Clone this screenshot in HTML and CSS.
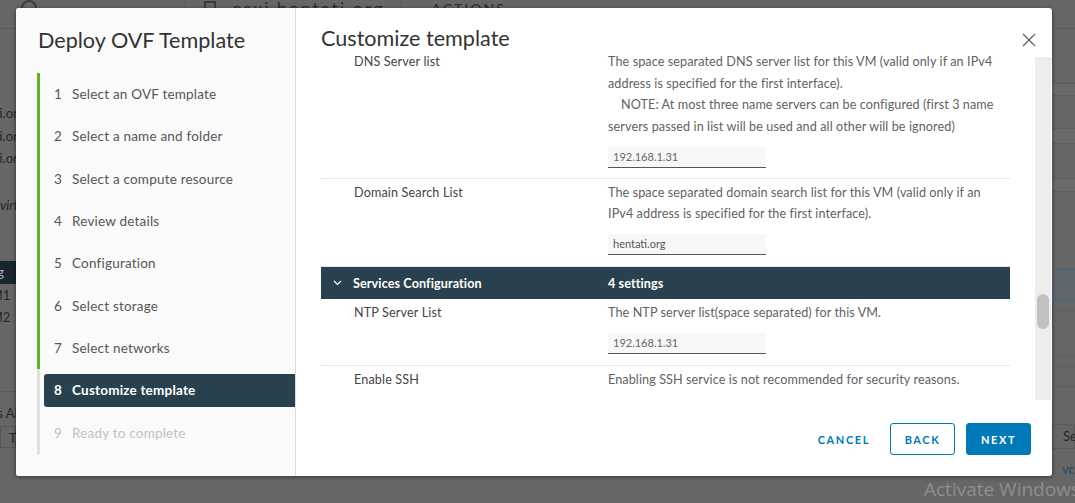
FILE: index.html
```html
<!DOCTYPE html>
<html lang="en">
<head>
<meta charset="utf-8">
<title>Deploy OVF Template</title>
<link rel="stylesheet" href="styles.css">
</head>
<body>
<div class="page">
  <header class="topbar">
    <span class="tb-icon"></span>
    <span class="tb-div first"></span>
    <span class="tb-vm"></span>
    <span class="tb-host">esxi.hentati.org</span>
    <span class="tb-div second"></span>
    <span class="tb-act">ACTIONS</span>
  </header>
  <div class="bg-body">
    <aside class="bg-tree">
      <div class="bg-item">esxi01.hentati.org</div>
      <div class="bg-item">esxi02.hentati.org</div>
      <div class="bg-item">esxi03.hentati.org</div>
      <div class="bg-item bg-italic">Discovered virtual machines</div>
      <div class="bg-item bg-sel">vcsa.hentati.org</div>
      <div class="bg-item bg-short">VM1</div>
      <div class="bg-item bg-short">VM2</div>
      <div class="bg-gap"></div>
      <div class="bg-item bg-tasks">Recent Tasks Alarms</div>
      <div class="bg-item bg-cell">Task Name</div>
    </aside>
    <section class="bg-main"></section>
    <aside class="bg-right">
      <div class="bg-r h28"></div>
      <div class="bg-r band h12"></div>
      <div class="bg-r h33"></div>
      <div class="bg-r band h15"></div>
      <div class="bg-r h35"></div>
      <div class="bg-r band h13"></div>
      <div class="bg-r h77"></div>
      <div class="bg-r bg-rsel"></div>
      <div class="bg-r h10"></div>
      <div class="bg-r h45"></div>
      <div class="bg-r h11"></div>
      <div class="bg-r h20"></div>
      <div class="bg-r bg-rhead">Server</div>
      <div class="bg-r bg-rlink">vcenter</div>
    </aside>
  </div>
</div>

<div class="watermark">Activate Windows</div>

<div class="modal" role="dialog">
  <nav class="wizard-nav">
    <h1 class="wizard-title">Deploy OVF Template</h1>
    <ol class="steps">
      <li class="step done"><span class="step-inner"><span class="num">1</span>Select an OVF template</span></li>
      <li class="step done"><span class="step-inner"><span class="num">2</span>Select a name and folder</span></li>
      <li class="step done"><span class="step-inner"><span class="num">3</span>Select a compute resource</span></li>
      <li class="step done"><span class="step-inner"><span class="num">4</span>Review details</span></li>
      <li class="step done"><span class="step-inner"><span class="num">5</span>Configuration</span></li>
      <li class="step done"><span class="step-inner"><span class="num">6</span>Select storage</span></li>
      <li class="step done"><span class="step-inner"><span class="num">7</span>Select networks</span></li>
      <li class="step active"><span class="step-inner"><span class="num">8</span>Customize template</span></li>
      <li class="step disabled"><span class="step-inner"><span class="num">9</span>Ready to complete</span></li>
    </ol>
  </nav>

  <section class="wizard-main">
    <header class="main-head">
      <h2 class="main-title">Customize template</h2>
      <button class="close" aria-label="Close">
        <svg width="14" height="14" viewBox="0 0 14 14"><path d="M1 1 L13 13 M13 1 L1 13" stroke="#666" stroke-width="1.4" fill="none"/></svg>
      </button>
    </header>

    <div class="main-body">
      <div class="rows">
        <div class="row first">
          <div class="row-label">DNS Server list</div>
          <div class="row-value">
            <p class="desc">The space separated DNS server list for this VM (valid only if an IPv4<br>address is specified for the first interface).<br><span class="indent">NOTE: At most three name servers can be configured (first 3 name</span><br>servers passed in list will be used and all other will be ignored)</p>
            <div class="input">192.168.1.31</div>
          </div>
        </div>
        <div class="row">
          <div class="row-label">Domain Search List</div>
          <div class="row-value">
            <p class="desc">The space separated domain search list for this VM (valid only if an<br>IPv4 address is specified for the first interface).</p>
            <div class="input dark">hentati.org</div>
          </div>
        </div>
        <div class="section-head">
          <div class="sec-label">
            <svg class="chev" width="9" height="6" viewBox="0 0 9 6"><path d="M1 1 L4.5 4.5 L8 1" stroke="#fff" stroke-width="1.2" fill="none"/></svg>
            Services Configuration
          </div>
          <div class="sec-count">4 settings</div>
        </div>
        <div class="row">
          <div class="row-label">NTP Server List</div>
          <div class="row-value">
            <p class="desc">The NTP server list(space separated) for this VM.</p>
            <div class="input">192.168.1.31</div>
          </div>
        </div>
        <div class="row">
          <div class="row-label">Enable SSH</div>
          <div class="row-value">
            <p class="desc">Enabling SSH service is not recommended for security reasons.</p>
          </div>
        </div>
      </div>
      <div class="scroll-track"><div class="scroll-thumb"></div></div>
    </div>

    <footer class="main-foot">
      <button class="btn btn-link">CANCEL</button>
      <button class="btn btn-outline">BACK</button>
      <button class="btn btn-primary">NEXT</button>
    </footer>
  </section>
</div>
</body>
</html>
```

FILE: styles.css
```css
html, body {
  margin: 0;
  padding: 0;
}
body {
  width: 1075px;
  height: 503px;
  overflow: hidden;
  position: relative;
  background: #666666;
  font-family: "Lato", "Open Sans", sans-serif;
}

/* ---------- dimmed background page ---------- */
.page {
  width: 1075px;
  height: 503px;
  display: flex;
  flex-direction: column;
}
.topbar {
  height: 28px;
  flex: none;
  display: flex;
  align-items: center;
  border-bottom: 1px solid #5c5c5c;
  color: #2c2c2c;
  font-size: 18px;
  letter-spacing: 2px;
}
.tb-icon {
  width: 12px;
  height: 12px;
  margin: 0 0 12px 21px;
  border: 2px solid #3c3c3c;
  border-radius: 50%;
}
.tb-div {
  width: 1px;
  height: 28px;
  background: #5a5a5a;
}
.tb-div.first { margin-left: 148px; }
.tb-div.second { margin-left: 16px; }
.tb-vm {
  width: 8px;
  height: 12px;
  border: 2px solid #3c3c3c;
  margin: 0 0 10px 18px;
}
.tb-host { margin: 0 0 12px 16px; }
.tb-act { margin: 0 0 12px 30px; font-size: 14px; }

.bg-body {
  flex: 1;
  display: flex;
}
.bg-tree {
  width: 16px;
  flex: none;
  overflow: hidden;
  padding-top: 73px;
  font-size: 13px;
  color: #262626;
}
.bg-item {
  height: 22.5px;
  line-height: 22.5px;
  white-space: nowrap;
  text-indent: -78px;
}
.bg-italic { font-style: italic; margin-top: 24px; text-indent: -62px; }
.bg-sel { margin-top: 45px; background: #18262e; color: #a9b3b8; text-indent: -86px; }
.bg-short { text-indent: -18px; }
.bg-gap { height: 62px; border-bottom: 1px solid #5a5a5a; }
.bg-tasks { margin-top: 10px; text-indent: -70px; }
.bg-cell { margin-top: 2px; height: 20px; border: 1px solid #575757; text-indent: 8px; }
.bg-main { flex: 1; }
.bg-right {
  width: 23px;
  flex: none;
  overflow: hidden;
  display: flex;
  flex-direction: column;
  padding-top: 27px;
  font-size: 13px;
  color: #262626;
}
.bg-r { border-bottom: 1px solid #5e5e5e; box-sizing: border-box; flex: none; white-space: nowrap; }
.band { background: #6a6a6a; }
.h28 { height: 28px; }
.h12 { height: 12px; }
.h33 { height: 33px; }
.h15 { height: 15px; }
.h35 { height: 35px; }
.h13 { height: 13px; }
.h77 { height: 77px; }
.h10 { height: 10px; }
.h45 { height: 45px; }
.h11 { height: 11px; }
.h20 { height: 20px; }
.bg-rsel { height: 32px; background: #5f666b; border-top: 1px solid #2f6e93; border-bottom: 1px solid #2f6e93; }
.bg-rhead { height: 25px; line-height: 23px; padding-left: 10px; border: 1px solid #5a5a5a; margin-top: 37px; }
.bg-rlink { height: 20px; line-height: 20px; padding-left: 10px; color: #1d4b66; border: none; margin-top: 10px; }

.watermark {
  position: absolute;
  left: 924px;
  top: 476px;
  font-family: "Open Sans", sans-serif;
  font-size: 19px;
  color: #8e8e8e;
  white-space: nowrap;
}

/* ---------- modal ---------- */
.modal {
  position: absolute;
  left: 16px;
  top: 8px;
  width: 1036px;
  height: 468px;
  display: flex;
  background: #fff;
  border-radius: 3px;
  box-shadow: 0 1px 4px rgba(0, 0, 0, 0.5);
  overflow: hidden;
}

.wizard-nav {
  width: 280px;
  flex: none;
  box-sizing: border-box;
  background: #fafafa;
  border-right: 1px solid #dcdcdc;
  padding: 18px 0 0 21px;
}
.wizard-title {
  margin: 0 0 19px 1px;
  font-size: 21.6px;
  line-height: 28px;
  font-weight: 400;
  color: #333333;
}
.steps {
  list-style: none;
  margin: 0;
  padding: 0;
}
.step {
  height: 42.3px;
  display: flex;
  align-items: center;
  border-left: 3px solid #e0e0e0;
}
.step.done { border-left-color: #62b51c; }
.step-inner {
  flex: 1;
  margin-left: 4px;
  height: 33px;
  display: flex;
  align-items: center;
  padding-left: 10px;
  border-radius: 3px 0 0 3px;
  font-size: 13.5px;
  letter-spacing: 0.2px;
  color: #565656;
}
.num { margin-right: 10px; }
.step.active .step-inner {
  background: #29414e;
  color: #ffffff;
  font-weight: 700;
}
.step.disabled .step-inner { color: #c2c2c2; }

.wizard-main {
  flex: 1;
  display: flex;
  flex-direction: column;
  min-width: 0;
}
.main-head {
  height: 43px;
  flex: none;
  display: flex;
  align-items: flex-start;
  justify-content: space-between;
  padding: 0 16px 0 25px;
}
.main-title {
  margin: 17px 0 0 0;
  font-size: 21.6px;
  line-height: 26px;
  font-weight: 400;
  color: #333333;
}
.close {
  margin-top: 25px;
  padding: 0;
  border: none;
  background: none;
  width: 14px;
  height: 14px;
}

.main-body {
  height: 349px;
  flex: none;
  display: flex;
  overflow: hidden;
}
.rows {
  width: 689px;
  flex: none;
  margin-left: 25px;
}
.row {
  display: grid;
  grid-template-columns: 287px 1fr;
  padding: 3px 0 11px;
  border-bottom: 1px solid #e6e6e6;
  font-size: 12.6px;
  line-height: 21.67px;
}
.row.first { padding-top: 0; padding-bottom: 10px; }
.row-label {
  padding-left: 33px;
  color: #454545;
  letter-spacing: 0.15px;
}
.desc {
  margin: 0;
  color: #626262;
  letter-spacing: 0.1px;
}
.indent { padding-left: 13px; }
.input {
  margin-top: 9px;
  width: 153px;
  height: 20px;
  line-height: 20px;
  padding-left: 5px;
  background: #f7f7f7;
  border-bottom: 1px solid #565656;
  font-size: 11px;
  color: #666;
}
.input.dark { color: #575757; }

.section-head {
  height: 32px;
  display: grid;
  grid-template-columns: 287px 1fr;
  align-items: center;
  background: #29414e;
  color: #ffffff;
  font-size: 12.6px;
  font-weight: 700;
  letter-spacing: 0.1px;
}
.sec-label {
  display: flex;
  align-items: center;
  padding-left: 12px;
}
.chev { margin-right: 11px; }

.scroll-track {
  width: 16px;
  flex: none;
  margin: 6px 0 0 25px;
  height: 343px;
  background: #ededed;
}
.scroll-thumb {
  width: 12px;
  height: 35px;
  margin: 237px 0 0 2px;
  border-radius: 6px;
  background: #c1c1c1;
}

.main-foot {
  flex: 1;
  display: flex;
  justify-content: flex-end;
  align-items: flex-start;
  gap: 11px;
  padding: 23px 21px 0 0;
}
.btn {
  min-width: 65px;
  height: 32px;
  box-sizing: border-box;
  border-radius: 3px;
  font-family: "Lato", "Open Sans", sans-serif;
  font-size: 11px;
  font-weight: 700;
  letter-spacing: 1.6px;
  padding: 0 8px;
  cursor: pointer;
}
.btn-link { background: none; border: 1px solid transparent; color: #0079b8; }
.btn-outline { background: #fff; border: 1px solid #0079b8; color: #0079b8; }
.btn-primary { background: #0079b8; border: 1px solid #0079b8; color: #fff; }
```
